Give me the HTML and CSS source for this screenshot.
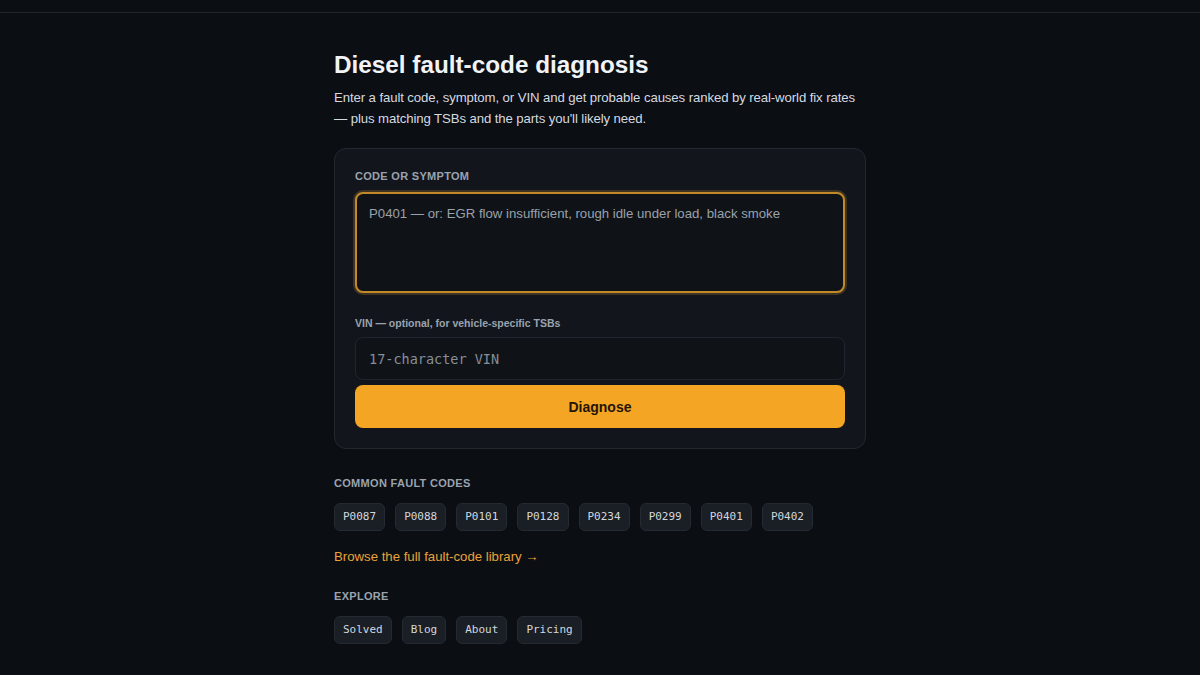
FILE: index.html
```html
<!DOCTYPE html>
<html lang="en">
<head>
    <meta charset="UTF-8">
    <title>Diesel fault-code diagnosis</title>
    <link rel="stylesheet" href="styles.css">
</head>
<body>
<div class="topbar"></div>

<div class="main">
    <h1 class="title">Diesel fault-code diagnosis</h1>
    <p class="intro">Enter a fault code, symptom, or VIN and get probable causes ranked by real-world fix rates — plus matching TSBs and the parts you'll likely need.</p>

    <form class="card">
        <label class="label caps" for="code">Code or symptom</label>
        <textarea id="code" class="symptom" placeholder="P0401 — or: EGR flow insufficient, rough idle under load, black smoke"></textarea>

        <label class="label vin-label" for="vin">VIN — optional, for vehicle-specific TSBs</label>
        <input id="vin" class="vin" type="text" placeholder="17-character VIN">

        <button class="go" type="button">Diagnose</button>
    </form>

    <div class="section">
        <div class="label caps">Common fault codes</div>
        <ul class="chips">
            <li>P0087</li>
            <li>P0088</li>
            <li>P0101</li>
            <li>P0128</li>
            <li>P0234</li>
            <li>P0299</li>
            <li>P0401</li>
            <li>P0402</li>
        </ul>
        <a class="more" href="#">Browse the full fault-code library →</a>
    </div>

    <div class="section">
        <div class="label caps">Explore</div>
        <ul class="chips">
            <li>Solved</li>
            <li>Blog</li>
            <li>About</li>
            <li>Pricing</li>
        </ul>
    </div>
</div>
</body>
</html>
```

FILE: styles.css
```css
* {
    padding: 0;
    margin: 0;
    box-sizing: border-box;
    list-style: none;
}

body {
    background: #0b0e13;
    color: #e6e9ee;
    font-family: "Liberation Sans", Arial, sans-serif;
}

.topbar {
    height: 13px;
    border-bottom: 1px solid #20252c;
}

.main {
    width: 532px;
    margin: 0 auto;
    padding-top: 38px;
}

.title {
    font-size: 24.3px;
    font-weight: bold;
    line-height: 28px;
    color: #f1f3f6;
}

.intro {
    margin-top: 8px;
    font-size: 13.2px;
    letter-spacing: -0.1px;
    line-height: 21px;
    color: #d5dae0;
}

.card {
    margin-top: 19px;
    padding: 20px;
    background: #12161c;
    border: 1px solid #232830;
    border-radius: 12px;
    display: flex;
    flex-direction: column;
}

.label {
    font-size: 11px;
    font-weight: bold;
    color: #9aa3ae;
    line-height: 14px;
}

.caps {
    text-transform: uppercase;
    letter-spacing: 0.3px;
}

.symptom {
    margin-top: 9px;
    height: 101px;
    resize: none;
    background: #0f1318;
    border: 2px solid #c08a2a;
    border-radius: 8px;
    box-shadow: 0 0 0 2px rgba(192, 138, 42, 0.25);
    padding: 12px 12px;
    font-family: "Liberation Sans", Arial, sans-serif;
    font-size: 13.2px;
    color: #e6e9ee;
    outline: none;
}

.symptom::placeholder {
    color: #9aa1ab;
}

.vin-label {
    margin-top: 23px;
    font-size: 10.5px;
}

.vin {
    margin-top: 7px;
    height: 43px;
    background: #0f1318;
    border: 1px solid #20252d;
    border-radius: 8px;
    padding: 0 13px;
    font-family: "DejaVu Sans Mono", "Liberation Mono", monospace;
    font-size: 13.5px;
    color: #e6e9ee;
    outline: none;
}

.vin::placeholder {
    color: #878e98;
}

.go {
    margin-top: 5px;
    height: 43px;
    background: #f5a524;
    border: 0;
    border-radius: 8px;
    font-family: "Liberation Sans", Arial, sans-serif;
    font-size: 14px;
    font-weight: bold;
    color: #241505;
    cursor: pointer;
}

.section {
    margin-top: 27px;
}

.section + .section {
    margin-top: 24px;
}

.chips {
    margin-top: 13px;
    display: flex;
    gap: 10px;
}

.chips li {
    height: 28px;
    line-height: 26px;
    padding: 0 8px;
    background: #1a1e25;
    border: 1px solid #252a32;
    border-radius: 6px;
    font-family: "DejaVu Sans Mono", "Liberation Mono", monospace;
    font-size: 11px;
    color: #d3d8de;
}

.more {
    display: inline-block;
    margin-top: 18px;
    font-size: 13.2px;
    color: #e8a33a;
    text-decoration: none;
}
```
